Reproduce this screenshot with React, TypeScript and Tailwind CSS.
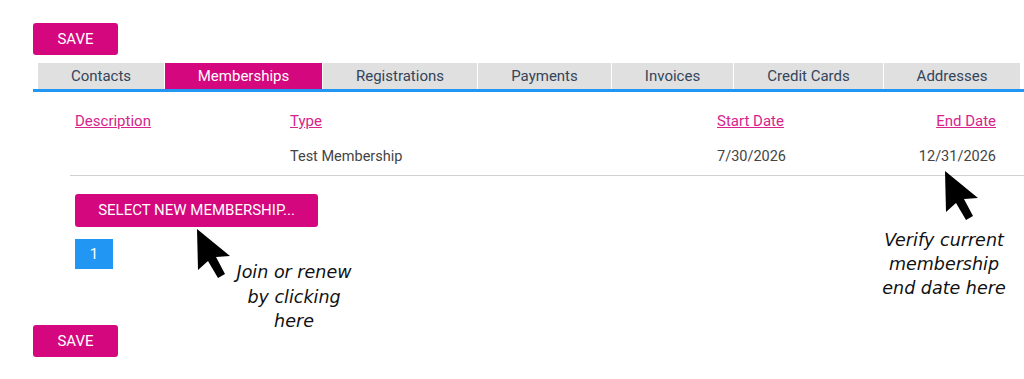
const tabs = [
  { label: 'Contacts', w: 'w-[126px]' },
  { label: 'Memberships', w: 'w-[157px]', active: true },
  { label: 'Registrations', w: 'w-[154px]' },
  { label: 'Payments', w: 'w-[133px]' },
  { label: 'Invoices', w: 'w-[121px]' },
  { label: 'Credit Cards', w: 'w-[149px]' },
  { label: 'Addresses', w: 'w-[136px]' },
];

const Pointer = () => (
  <svg width="34" height="50" viewBox="0 0 34 50" className="block">
    <polygon
      points="0,0 1,41 11,32 21,49 28,45 19,28 33,27"
      fill="#000"
    />
  </svg>
);

const SaveButton = () => (
  <button className="h-8 w-[85px] rounded-[3px] bg-[#d4077e] text-[15px] text-white">
    SAVE
  </button>
);

export default function App() {
  return (
    <div className="relative h-[379px] w-[1024px] overflow-hidden bg-white pl-[33px] pt-[23px] font-['Roboto',sans-serif]">
      <SaveButton />

      <div className="mt-2">
        <div className="ml-[5px] flex h-[26px] gap-px">
          {tabs.map((t) => (
            <div
              key={t.label}
              className={`${t.w} flex items-center justify-center text-[15px] ${
                t.active ? 'bg-[#d4077e] text-white' : 'bg-[#e0e0e0] text-[#34455a]'
              }`}
            >
              {t.label}
            </div>
          ))}
        </div>
        <div className="h-[3px] bg-[#2196f3]" />
      </div>

      <div className="ml-[37px] border-b border-[#d0d0d0]">
        <div className="flex pt-[19px] pb-2 pl-[5px] pr-[28px] text-[15px] leading-5 text-[#d6248c] underline">
          <span className="w-[215px]">Description</span>
          <span className="w-[427px]">Type</span>
          <span className="w-[150px]">Start Date</span>
          <span className="flex-1 text-right">End Date</span>
        </div>
        <div className="flex py-2 pl-[5px] pr-[28px] text-[14.5px] leading-5 text-[#444]">
          <span className="w-[215px]" />
          <span className="w-[427px]">Test Membership</span>
          <span className="w-[150px]">7/30/2026</span>
          <span className="flex-1 text-right">12/31/2026</span>
        </div>
      </div>

      <div className="ml-[42px]">
        <button className="mt-[18px] h-[33px] w-[243px] rounded-[3px] bg-[#d4077e] text-[15px] text-white">
          SELECT NEW MEMBERSHIP...
        </button>
        <div className="mt-3 flex h-[30px] w-[38px] items-center justify-center bg-[#2196f3] text-[15px] text-white">
          1
        </div>
      </div>

      <div className="mt-14">
        <SaveButton />
      </div>

      <div className="absolute left-[197px] top-[229px]">
        <Pointer />
      </div>
      <div className="absolute left-[214px] top-[260px] w-[160px] text-center font-['DejaVu_Sans',sans-serif] text-[17.5px] italic leading-[24.5px] text-[#111]">
        Join or renew
        <br />
        by clicking
        <br />
        here
      </div>

      <div className="absolute left-[945px] top-[171px]">
        <Pointer />
      </div>
      <div className="absolute left-[864px] top-[228px] w-[160px] text-center font-['DejaVu_Sans',sans-serif] text-[17.5px] italic leading-6 text-[#111]">
        Verify current
        <br />
        membership
        <br />
        end date here
      </div>
    </div>
  );
}
